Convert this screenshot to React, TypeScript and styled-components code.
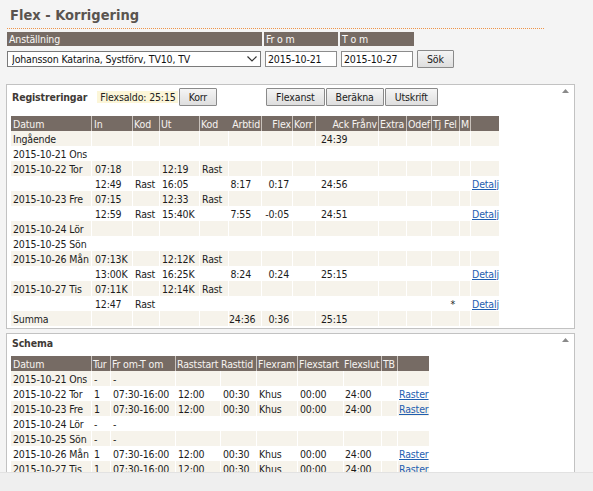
import React from "react";
import styled, { createGlobalStyle } from "styled-components";

type Align = "left" | "right";

type Column = {
  key: string;
  label: string;
  w: number;
  hAlign: Align;
  hPad: number;
  bAlign: Align;
  bPad: number;
  joined?: boolean;
};

type Row = Record<string, string | undefined>;

const regColumns: Column[] = [
  { key: "datum", label: "Datum", w: 80, hAlign: "left", hPad: 2, bAlign: "left", bPad: 2 },
  { key: "in", label: "In", w: 41, hAlign: "left", hPad: 2, bAlign: "left", bPad: 3 },
  { key: "kod", label: "Kod", w: 27, hAlign: "left", hPad: 1, bAlign: "left", bPad: 2 },
  { key: "ut", label: "Ut", w: 40, hAlign: "left", hPad: 1, bAlign: "left", bPad: 2 },
  { key: "kod2", label: "Kod", w: 29, hAlign: "left", hPad: 1, bAlign: "left", bPad: 2 },
  { key: "arb", label: "Arbtid", w: 33, hAlign: "right", hPad: 1, bAlign: "right", bPad: 10, joined: true },
  { key: "flex", label: "Flex", w: 31, hAlign: "right", hPad: 1, bAlign: "right", bPad: 3 },
  { key: "korr", label: "Korr", w: 23, hAlign: "left", hPad: 1, bAlign: "left", bPad: 2 },
  { key: "ack", label: "Ack Frånv", w: 63, hAlign: "right", hPad: 1, bAlign: "left", bPad: 5 },
  { key: "extra", label: "Extra", w: 28, hAlign: "left", hPad: 1, bAlign: "left", bPad: 2 },
  { key: "odef", label: "Odef", w: 25, hAlign: "left", hPad: 1, bAlign: "left", bPad: 2 },
  { key: "tj", label: "Tj Fel", w: 28, hAlign: "left", hPad: 1, bAlign: "right", bPad: 4 },
  { key: "m", label: "M", w: 11, hAlign: "left", hPad: 1, bAlign: "left", bPad: 1 },
  { key: "link", label: "", w: 29, hAlign: "left", hPad: 1, bAlign: "left", bPad: 1 },
];

const regRows: Row[] = [
  { datum: "Ingående", ack: "24:39" },
  { datum: "2015-10-21 Ons" },
  { datum: "2015-10-22 Tor", in: "07:18", ut: "12:19", kod2: "Rast" },
  { in: "12:49", kod: "Rast", ut: "16:05", arb: "8:17", flex: "0:17", ack: "24:56", link: "Detalj" },
  { datum: "2015-10-23 Fre", in: "07:15", ut: "12:33", kod2: "Rast" },
  { in: "12:59", kod: "Rast", ut: "15:40K", arb: "7:55", flex: "-0:05", ack: "24:51", link: "Detalj" },
  { datum: "2015-10-24 Lör" },
  { datum: "2015-10-25 Sön" },
  { datum: "2015-10-26 Mån", in: "07:13K", ut: "12:12K", kod2: "Rast" },
  { in: "13:00K", kod: "Rast", ut: "16:25K", arb: "8:24", flex: "0:24", ack: "25:15", link: "Detalj" },
  { datum: "2015-10-27 Tis", in: "07:11K", ut: "12:14K", kod2: "Rast" },
  { in: "12:47", kod: "Rast", tj: "*", link: "Detalj" },
  { datum: "Summa", arb: "24:36", flex: "0:36", ack: "25:15" },
];

const schemaColumns: Column[] = [
  { key: "datum", label: "Datum", w: 80, hAlign: "left", hPad: 2, bAlign: "left", bPad: 2 },
  { key: "tur", label: "Tur", w: 19, hAlign: "left", hPad: 1, bAlign: "left", bPad: 2 },
  { key: "tid", label: "Fr om-T om", w: 65, hAlign: "left", hPad: 1, bAlign: "left", bPad: 2 },
  { key: "rstart", label: "Raststart", w: 45, hAlign: "left", hPad: 1, bAlign: "left", bPad: 2 },
  { key: "rtid", label: "Rasttid", w: 36, hAlign: "left", hPad: 0, bAlign: "left", bPad: 2, joined: true },
  { key: "ram", label: "Flexram", w: 41, hAlign: "left", hPad: 1, bAlign: "left", bPad: 2 },
  { key: "fstart", label: "Flexstart", w: 46, hAlign: "left", hPad: 1, bAlign: "left", bPad: 2 },
  { key: "fslut", label: "Flexslut", w: 38, hAlign: "left", hPad: 0, bAlign: "left", bPad: 1, joined: true },
  { key: "tb", label: "TB", w: 16, hAlign: "left", hPad: 1, bAlign: "left", bPad: 1 },
  { key: "link", label: "", w: 32, hAlign: "left", hPad: 1, bAlign: "left", bPad: 1 },
];

const workDay = (datum: string): Row => ({
  datum,
  tur: "1",
  tid: "07:30-16:00",
  rstart: "12:00",
  rtid: "00:30",
  ram: "Khus",
  fstart: "00:00",
  fslut: "24:00",
  link: "Raster",
});

const freeDay = (datum: string): Row => ({ datum, tur: "-", tid: "-" });

const schemaRows: Row[] = [
  freeDay("2015-10-21 Ons"),
  workDay("2015-10-22 Tor"),
  workDay("2015-10-23 Fre"),
  freeDay("2015-10-24 Lör"),
  freeDay("2015-10-25 Sön"),
  workDay("2015-10-26 Mån"),
  workDay("2015-10-27 Tis"),
];

const DataTable = ({ columns, rows }: { columns: Column[]; rows: Row[] }) => {
  const total = columns.reduce((sum, c) => sum + c.w, 0);
  return (
    <Table style={{ width: total }}>
      <thead>
        <tr>
          {columns.map((c, i) => (
            <Th key={c.key} $w={c.w} $align={c.hAlign} $pad={c.hPad} $first={i === 0} $joined={c.joined}>
              {c.label}
            </Th>
          ))}
        </tr>
      </thead>
      <tbody>
        {rows.map((r, ri) => (
          <Tr key={ri} $alt={ri % 2 === 0}>
            {columns.map((c, i) => (
              <Td key={c.key} $align={c.bAlign} $pad={c.bPad} $first={i === 0}>
                {c.key === "link" && r.link ? <CellLink href="#">{r.link}</CellLink> : r[c.key]}
              </Td>
            ))}
          </Tr>
        ))}
      </tbody>
    </Table>
  );
};

const ScrollUp = () => (
  <ScrollArrow width="7" height="4" viewBox="0 0 7 4">
    <polygon points="0,4 3.5,0 7,4" fill="#8a8a8a" />
  </ScrollArrow>
);

const App = () => {
  return (
    <Page>
      <GlobalStyle />
      <Main>
        <Title>Flex - Korrigering</Title>
        <Filter>
          <FilterLabel>Anställning</FilterLabel>
          <FilterLabel>Fr o m</FilterLabel>
          <FilterLabel>T o m</FilterLabel>
          <span />
          <SelectWrap>
            <Select defaultValue="kj">
              <option value="kj">Johansson Katarina, Systförv, TV10, TV</option>
            </Select>
            <Chevron width="10" height="6" viewBox="0 0 10 6">
              <polyline points="0.5,0.5 5,5 9.5,0.5" fill="none" stroke="#333" strokeWidth="1.2" />
            </Chevron>
          </SelectWrap>
          <DateInput defaultValue="2015-10-21" />
          <DateInput defaultValue="2015-10-27" />
          <Button>Sök</Button>
        </Filter>

        <Panel $height={245}>
          <ScrollUp />
          <Toolbar $h={17} $gap={11}>
            <SectionTitle>Registreringar</SectionTitle>
            <Saldo>Flexsaldo: 25:15</Saldo>
            <Button>Korr</Button>
            <ButtonGroup>
              <Button>Flexanst</Button>
              <Button>Beräkna</Button>
              <Button>Utskrift</Button>
            </ButtonGroup>
          </Toolbar>
          <DataTable columns={regColumns} rows={regRows} />
        </Panel>

        <Panel>
          <ScrollUp />
          <Toolbar $h={12} $gap={7}>
            <SectionTitle>Schema</SectionTitle>
          </Toolbar>
          <DataTable columns={schemaColumns} rows={schemaRows} />
        </Panel>
      </Main>
      <StatusBar />
    </Page>
  );
};

const GlobalStyle = createGlobalStyle`
  html, body {
    margin: 0;
    padding: 0;
  }
  body {
    background: #f4f4f4;
    font-family: "DejaVu Sans Condensed", "Liberation Sans", sans-serif;
    font-size: 10.5px;
    letter-spacing: -0.15px;
    color: #1c1c1c;
  }
`;

const Page = styled.div`
  height: 491px;
  display: flex;
  flex-direction: column;
  overflow: hidden;
`;

const Main = styled.div`
  flex: 1;
  overflow: hidden;
  padding-left: 6px;
`;

const StatusBar = styled.div`
  height: 18px;
  background: #efefef;
  border-top: 1px solid #e2e2e2;
`;

const Title = styled.h1`
  width: 537px;
  margin: 0 0 0 1px;
  padding: 6px 0 4px 3px;
  box-sizing: border-box;
  height: 29px;
  font-size: 14.5px;
  line-height: 18px;
  letter-spacing: 0;
  font-weight: bold;
  color: #5a544f;
  border-bottom: 1px dotted #ee9448;
`;

const Filter = styled.div`
  display: grid;
  grid-template-columns: 255px 74px 74px auto;
  column-gap: 2px;
  row-gap: 4px;
  align-items: center;
  margin: 3px 0 16px 1px;
`;

const FilterLabel = styled.div`
  height: 14px;
  line-height: 14px;
  padding-left: 2px;
  background: #766b64;
  color: #fbf9f7;
`;

const SelectWrap = styled.div`
  position: relative;
  width: 254px;
  height: 16px;
`;

const Select = styled.select`
  appearance: none;
  width: 100%;
  height: 16px;
  box-sizing: border-box;
  margin: 0;
  padding: 0 16px 0 4px;
  border: 1px solid #7a7a7a;
  border-radius: 0;
  background: #fff;
  font: inherit;
  letter-spacing: inherit;
  color: #111;
  line-height: 14px;
`;

const Chevron = styled.svg`
  position: absolute;
  right: 4px;
  top: 5px;
  pointer-events: none;
`;

const DateInput = styled.input`
  width: 72px;
  height: 16px;
  box-sizing: border-box;
  margin: 0 0 0 1px;
  padding: 0 2px;
  border: 1px solid #8c8c8c;
  background: #fff;
  font: inherit;
  letter-spacing: inherit;
  color: #111;
`;

const Button = styled.button`
  height: 18px;
  box-sizing: border-box;
  margin: 0 0 0 1px;
  padding: 0 9px;
  border: 1px solid #8a8a8a;
  border-radius: 1px;
  background: linear-gradient(#f5f5f5, #dedede);
  font: inherit;
  letter-spacing: inherit;
  color: #1c1c1c;
  line-height: 16px;
  justify-self: start;
`;

const Panel = styled.div<{ $height?: number }>`
  position: relative;
  width: 569px;
  box-sizing: border-box;
  height: ${(p) => (p.$height ? `${p.$height}px` : "auto")};
  overflow: hidden;
  margin-bottom: 4px;
  padding: 3px 22px 0 4px;
  background: #fff;
  border: 1px solid #c2c2c2;
`;

const ScrollArrow = styled.svg`
  position: absolute;
  top: 4px;
  right: 5px;
`;

const Toolbar = styled.div<{ $h: number; $gap: number }>`
  display: flex;
  align-items: center;
  height: ${(p) => p.$h}px;
  margin-bottom: ${(p) => p.$gap}px;
`;

const SectionTitle = styled.span`
  font-weight: bold;
  color: #3f3a36;
  padding-left: 1px;
  margin-right: 10px;
`;

const Saldo = styled.span`
  background: #fcf6d8;
  line-height: 12px;
  padding: 0 2px 0 3px;
  color: #222;
`;

const ButtonGroup = styled.div`
  display: flex;
  margin-left: 48px;
`;

const Table = styled.table`
  border-collapse: separate;
  border-spacing: 0;
  table-layout: fixed;
`;

const Th = styled.th<{ $w: number; $align: Align; $pad: number; $first: boolean; $joined?: boolean }>`
  box-sizing: border-box;
  width: ${(p) => p.$w}px;
  height: 15px;
  padding: 0 ${(p) => (p.$align === "right" ? p.$pad : 0)}px 0 ${(p) => (p.$align === "left" ? p.$pad : 0)}px;
  text-align: ${(p) => p.$align};
  font-weight: normal;
  color: #f6f3f0;
  background: #766b64;
  white-space: nowrap;
  overflow: hidden;
  border-left: ${(p) => (p.$first ? "none" : p.$joined ? "1px solid #766b64" : "1px solid #c9c2bc")};
`;

const Tr = styled.tr<{ $alt: boolean }>`
  background: ${(p) => (p.$alt ? "#f6f3eb" : "#ffffff")};
`;

const Td = styled.td<{ $align: Align; $pad: number; $first: boolean }>`
  height: 15px;
  padding: 0 ${(p) => (p.$align === "right" ? p.$pad : 0)}px 0 ${(p) => (p.$align === "left" ? p.$pad : 0)}px;
  text-align: ${(p) => p.$align};
  white-space: nowrap;
  overflow: visible;
  border-left: ${(p) => (p.$first ? "none" : "1px solid #fff")};
`;

const CellLink = styled.a`
  color: #1f5eb0;
  text-decoration: underline;
`;

export default App;
